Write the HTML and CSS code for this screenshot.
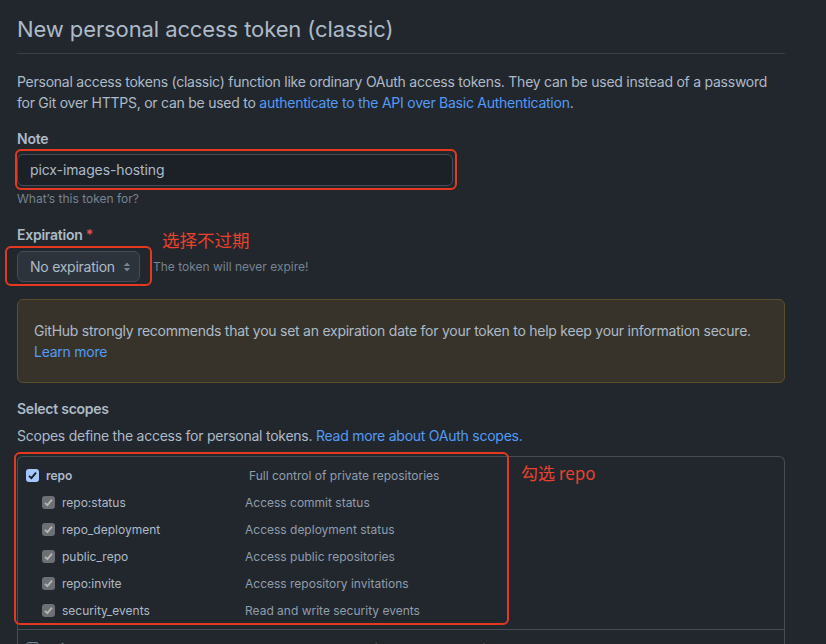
FILE: index.html
```html
<!DOCTYPE html>
<html lang="en">
<head>
<meta charset="utf-8">
<title>New personal access token (classic)</title>
<link rel="stylesheet" href="styles.css">
</head>
<body>
<main class="page">
  <h1 class="title">New personal access token (classic)</h1>
  <p class="intro">Personal access tokens (classic) function like ordinary OAuth access tokens. They can be used instead of a password for Git over HTTPS, or can be used to <a href="#">authenticate to the API over Basic Authentication</a>.</p>

  <div class="field">
    <label class="label">Note</label>
    <div class="mark-wrap">
      <div class="input">picx-images-hosting</div>
      <span class="redbox redbox-note"></span>
    </div>
    <div class="hint">What’s this token for?</div>
  </div>

  <div class="field field-exp">
    <label class="label">Expiration <span class="req">*</span></label>
    <span class="annot annot-exp">选择不过期</span>
    <div class="exp-row">
      <div class="mark-wrap">
        <div class="select">No expiration
          <svg class="caret" width="8" height="12" viewBox="0 0 8 12"><path d="M4 1.5 L7.2 5 H0.8 Z M4 10.5 L0.8 7 H7.2 Z" fill="#768390"/></svg>
        </div>
        <span class="redbox redbox-exp"></span>
      </div>
      <span class="exp-note">The token will never expire!</span>
    </div>
  </div>

  <div class="flash">GitHub strongly recommends that you set an expiration date for your token to help keep your information secure.<br><a href="#">Learn more</a></div>

  <h2 class="label scopes-title">Select scopes</h2>
  <p class="scopes-desc">Scopes define the access for personal tokens. <a href="#">Read more about OAuth scopes.</a></p>

  <div class="scopes">
    <span class="redbox redbox-scopes"></span>
    <span class="annot annot-repo">勾选 repo</span>
    <div class="group">
      <div class="row row-parent">
        <span class="cb cb-on"><svg width="13" height="13" viewBox="0 0 13 13"><path d="M3 6.8 L5.4 9.2 L10 3.6" fill="none" stroke="#1c2128" stroke-width="1.9"/></svg></span>
        <span class="name name-parent">repo</span>
        <span class="desc">Full control of private repositories</span>
      </div>
      <div class="row row-child">
        <span class="cb cb-dis"><svg width="13" height="13" viewBox="0 0 13 13"><path d="M3 6.8 L5.4 9.2 L10 3.6" fill="none" stroke="#b5b5b5" stroke-width="1.9"/></svg></span>
        <span class="name">repo:status</span>
        <span class="desc">Access commit status</span>
      </div>
      <div class="row row-child">
        <span class="cb cb-dis"><svg width="13" height="13" viewBox="0 0 13 13"><path d="M3 6.8 L5.4 9.2 L10 3.6" fill="none" stroke="#b5b5b5" stroke-width="1.9"/></svg></span>
        <span class="name">repo_deployment</span>
        <span class="desc">Access deployment status</span>
      </div>
      <div class="row row-child">
        <span class="cb cb-dis"><svg width="13" height="13" viewBox="0 0 13 13"><path d="M3 6.8 L5.4 9.2 L10 3.6" fill="none" stroke="#b5b5b5" stroke-width="1.9"/></svg></span>
        <span class="name">public_repo</span>
        <span class="desc">Access public repositories</span>
      </div>
      <div class="row row-child">
        <span class="cb cb-dis"><svg width="13" height="13" viewBox="0 0 13 13"><path d="M3 6.8 L5.4 9.2 L10 3.6" fill="none" stroke="#b5b5b5" stroke-width="1.9"/></svg></span>
        <span class="name">repo:invite</span>
        <span class="desc">Access repository invitations</span>
      </div>
      <div class="row row-child">
        <span class="cb cb-dis"><svg width="13" height="13" viewBox="0 0 13 13"><path d="M3 6.8 L5.4 9.2 L10 3.6" fill="none" stroke="#b5b5b5" stroke-width="1.9"/></svg></span>
        <span class="name">security_events</span>
        <span class="desc">Read and write security events</span>
      </div>
    </div>
    <div class="group">
      <div class="row row-parent">
        <span class="cb cb-off"></span>
        <span class="name name-parent">write:packages</span>
        <span class="desc">Upload packages to GitHub Package Registry</span>
      </div>
    </div>
  </div>
</main>
</body>
</html>
```

FILE: styles.css
```css
* { box-sizing: border-box; }
html, body {
  margin: 0;
  height: 100%;
  overflow: hidden;
  background: #22272e;
}
body {
  font-family: Inter, "Noto Sans CJK SC", sans-serif;
  color: #adbac7;
  font-size: 14px;
  line-height: 21px;
  letter-spacing: -0.25px;
}
a { color: #539bf5; text-decoration: none; }

.page {
  width: 768px;
  margin-left: 17px;
  padding-top: 14px;
}

.title {
  margin: 0;
  font-size: 22px;
  line-height: 30px;
  font-weight: 400;
  color: #adbac7;
  padding-bottom: 9px;
  border-bottom: 1px solid #373e47;
  letter-spacing: -0.1px;
}

.intro {
  margin: 17px 0 0;
  width: 768px;
}

.field { margin-top: 15px; }
.field-exp { margin-top: 16px; position: relative; }

.label {
  display: block;
  font-weight: 600;
  font-size: 14px;
  line-height: 21px;
  color: #adbac7;
  margin: 0;
}
.req { color: #e5534b; }

.mark-wrap { position: relative; }

.input {
  margin-top: 5px;
  width: 436px;
  height: 32px;
  border: 1px solid #444c56;
  border-radius: 6px;
  background: #1c2128;
  padding: 0 12px;
  line-height: 30px;
  color: #adbac7;
  letter-spacing: -0.1px;
}

.hint {
  margin-top: 4px;
  font-size: 12px;
  line-height: 18px;
  color: #768390;
  letter-spacing: 0;
}

.redbox {
  position: absolute;
  border: 2.5px solid #e5391f;
  border-radius: 6px;
  pointer-events: none;
}
.redbox-note { left: -2px; top: -5px; width: 442px; height: 41px; }
.redbox-exp { left: -12px; top: -5px; width: 147px; height: 40px; }
.redbox-scopes { left: -4px; top: -5px; width: 495px; height: 173px; }

.annot {
  position: absolute;
  color: #e8412c;
  font-family: "Noto Sans CJK SC", Inter, sans-serif;
  font-size: 17.5px;
  line-height: 20px;
  white-space: nowrap;
  letter-spacing: 0;
}
.annot-exp { left: 145px; top: 6px; }
.annot-repo { left: 503px; top: 6px; font-size: 17px; }

.exp-row {
  display: flex;
  align-items: center;
  margin-top: 6px;
}
.select {
  width: 123px;
  height: 31px;
  border: 1px solid #444c56;
  border-radius: 6px;
  background: #2d333b;
  padding: 0 0 0 12px;
  display: flex;
  align-items: center;
  color: #adbac7;
  position: relative;
}
.caret { position: absolute; right: 8px; top: 9px; }
.exp-note {
  margin-left: 13px;
  font-size: 12px;
  color: #768390;
  letter-spacing: 0;
}

.flash {
  margin-top: 17px;
  width: 768px;
  border: 1px solid #5a4f2a;
  border-radius: 6px;
  background: #37332a;
  padding: 20px 16px;
  color: #adbac7;
}

.scopes-title { margin-top: 15px; }
.scopes-desc { margin: 6px 0 0; }

.scopes {
  position: relative;
  margin-top: 10px;
  border: 1px solid #444c56;
  border-bottom: none;
  border-radius: 6px 6px 0 0;
  width: 768px;
}
.group {
  padding: 5px 0 5px;
  border-bottom: 1px solid #444c56;
}
.row {
  display: flex;
  align-items: center;
  height: 27px;
  letter-spacing: 0;
}
.row-parent { padding-left: 8px; }
.row-child { padding-left: 24px; }
.cb {
  width: 13px;
  height: 13px;
  border-radius: 3px;
  flex: none;
  display: inline-flex;
}
.cb-on { background: #a3c8ff; }
.cb-dis { background: #6c6f73; }
.cb-off { background: #2d333b; border: 1px solid #768390; }
.name {
  margin-left: 7px;
  font-size: 12px;
  color: #adbac7;
}
.name-parent { font-weight: 600; }
.row-parent .name { width: 203px; }
.row-child .name { width: 183px; }
.desc {
  font-size: 12px;
  color: #909dab;
}
```
